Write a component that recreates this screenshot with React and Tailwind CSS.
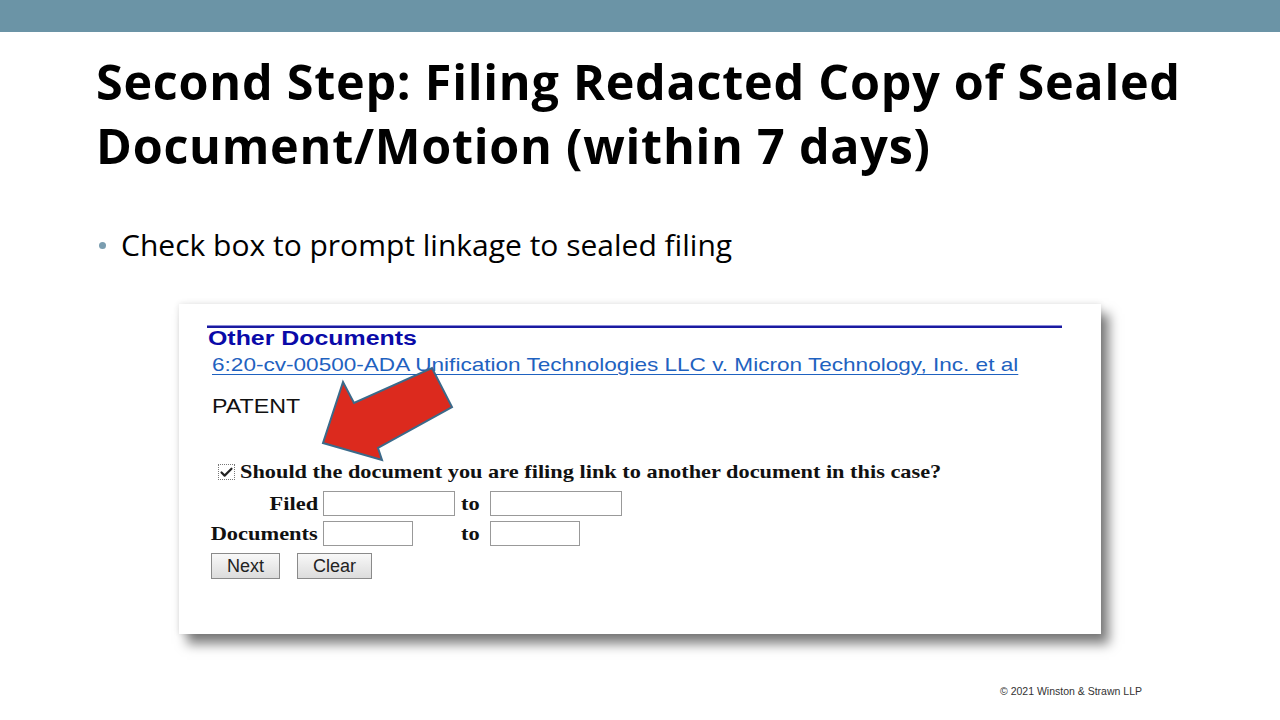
import { Check } from 'lucide-react';

const arial = { fontFamily: '"Liberation Sans", Arial, sans-serif' };
const times = { fontFamily: '"Liberation Serif", "Times New Roman", serif' };

export default function App() {
  return (
    <div className="relative w-[1280px] h-[720px] bg-white overflow-hidden" style={{ fontFamily: '"Open Sans", Lato, sans-serif' }}>
      <div className="h-[32px] bg-[#6b94a6]" />

      <div className="pl-[96px] pt-[17px]">
        <h1 className="text-[48.5px] leading-[64px] font-bold text-black tracking-[0.75px]">
          Second Step: Filing Redacted Copy of Sealed
          <br />
          Document/Motion (within 7 days)
        </h1>

        <div className="mt-[51px] flex items-center gap-[15px] pl-[3px] h-[34px]">
          <span className="w-[7px] h-[7px] rounded-full bg-[#7a9db0]" />
          <span className="text-[30px] leading-[34px] text-black">Check box to prompt linkage to sealed filing</span>
        </div>
      </div>

      {/* screenshot panel */}
      <div className="ml-[179px] mt-[42px] w-[922px] h-[330px] bg-white shadow-[0_0_6px_rgba(0,0,0,0.12),8px_10px_11px_rgba(0,0,0,0.5)] relative pt-[21px] pl-[28px]">
        <div className="w-[855px] h-[3px] bg-[#1a1aa0] border-t border-[#8a8ad8]" />
        <div className="h-[22px] leading-[22px] pl-[1px] -mt-[1px]" style={arial}>
          <span className="inline-block text-[20px] font-bold text-[#0a0aa8] scale-x-[1.245] origin-left">Other Documents</span>
        </div>
        <div className="h-[22px] leading-[22px] pl-[5px] mt-[5px]" style={arial}>
          <span className="inline-block text-[18.5px] text-[#1f62c0] underline underline-offset-[3px] scale-x-[1.22] origin-left">
            6:20-cv-00500-ADA Unification Technologies LLC v. Micron Technology, Inc. et al
          </span>
        </div>
        <div className="h-[22px] leading-[22px] pl-[5px] mt-[19px]" style={arial}>
          <span className="inline-block text-[20px] text-[#111] scale-x-[1.16] origin-left">PATENT</span>
        </div>

        <div className="mt-[44px] pl-[11px] flex items-center gap-[5px] h-[22px]" style={times}>
          <span className="w-[17px] h-[16px] border border-dotted border-[#777] flex items-center justify-center">
            <Check className="w-[15px] h-[15px] text-[#222]" strokeWidth={3.5} />
          </span>
          <span className="inline-block text-[19px] leading-[22px] font-bold text-[#111] scale-x-[1.175] origin-left whitespace-nowrap">
            Should the document you are filing link to another document in this case?
          </span>
        </div>

        <div className="mt-[8px] pl-[5px] flex flex-col gap-[5px] text-[19px] leading-[22px] font-bold text-[#111]" style={times}>
          <div className="flex items-center h-[25px]">
            <span className="w-[106px] text-right"><span className="inline-block scale-x-[1.18] origin-right">Filed</span></span>
            <span className="ml-[5px] w-[132px] h-[25px] border border-[#999] bg-white" />
            <span className="ml-[6px] w-[29px]"><span className="inline-block scale-x-[1.18] origin-left">to</span></span>
            <span className="w-[132px] h-[25px] border border-[#999] bg-white" />
          </div>
          <div className="flex items-center h-[25px]">
            <span className="w-[106px] text-right"><span className="inline-block scale-x-[1.18] origin-right">Documents</span></span>
            <span className="ml-[5px] w-[90px] h-[25px] border border-[#999] bg-white" />
            <span className="ml-[48px] w-[29px]"><span className="inline-block scale-x-[1.18] origin-left">to</span></span>
            <span className="w-[90px] h-[25px] border border-[#999] bg-white" />
          </div>
        </div>

        <div className="mt-[7px] pl-[4px] flex gap-[17px] text-[18px]" style={arial}>
          <span className="w-[69px] h-[26px] border border-[#8a8a8a] bg-gradient-to-b from-[#f8f8f8] to-[#dcdcdc] flex items-center justify-center text-[#222]">Next</span>
          <span className="w-[75px] h-[26px] border border-[#8a8a8a] bg-gradient-to-b from-[#f8f8f8] to-[#dcdcdc] flex items-center justify-center text-[#222]">Clear</span>
        </div>

        <svg className="absolute left-[-179px] top-[-304px] pointer-events-none" width="1280" height="720" viewBox="0 0 1280 720">
          <polygon
            points="323,443 343,382 354,403 432,368 452,407 378,448 382,460"
            fill="#dc2a1e"
            stroke="#3b6a8a"
            strokeWidth="2"
            strokeLinejoin="miter"
          />
        </svg>
      </div>

      <div className="absolute left-[1000px] top-[684px] text-[10.5px] text-[#333]" style={arial}>
        © 2021 Winston &amp; Strawn LLP
      </div>
    </div>
  );
}
